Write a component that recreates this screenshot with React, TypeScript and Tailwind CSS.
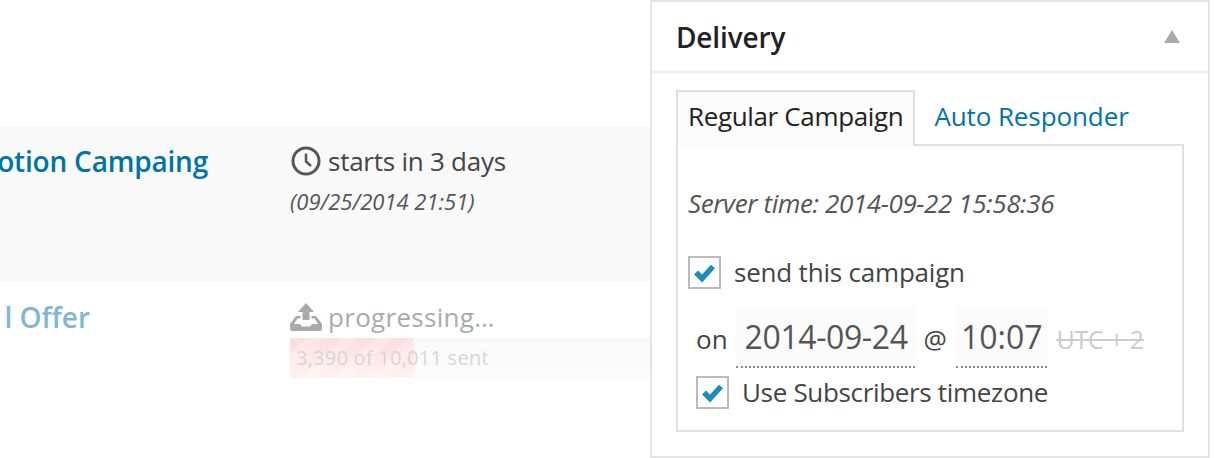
import React from "react";

function Check() {
  return (
    <span className="flex h-[33px] w-[33px] shrink-0 items-center justify-center border-2 border-[#bbbbbb] bg-white">
      <svg viewBox="0 0 29 29" className="h-[29px] w-[29px]">
        <path d="M6 14.5 L12 20.5 L23 8.5" fill="none" stroke="#1e8cbe" strokeWidth="5.5" />
      </svg>
    </span>
  );
}

function ClockIcon() {
  return (
    <svg viewBox="0 0 30 30" className="h-[30px] w-[30px] shrink-0" fill="none" stroke="#555555">
      <circle cx="15" cy="15" r="13" strokeWidth="3" />
      <path d="M15 7.5 V15.5 L20 20" strokeWidth="2.5" />
    </svg>
  );
}

function UploadIcon() {
  return (
    <svg viewBox="0 0 32 28" className="h-[28px] w-[32px] shrink-0" fill="#aaaaaa">
      <path d="M16 0 L24 9 H19.5 V17 H12.5 V9 H8 Z" />
      <path d="M6 13 H10.5 V15.5 H7.5 L4 21 H10 L12 23.5 H20 L22 21 H28 L24.5 15.5 H21.5 V13 H26 L32 21 V26 Q32 28 30 28 H2 Q0 28 0 26 V21 Z" />
    </svg>
  );
}

function App() {
  return (
    <div className="flex h-[458px] w-[1232px] overflow-hidden bg-white font-['Open_Sans',sans-serif] text-[#444444]">
      <div className="w-[650px] shrink-0 pt-[126px]">
        <div className="flex h-[156px] bg-[#f9f9f9] pt-[17px]">
          <div className="flex w-[208px] shrink-0 justify-end whitespace-nowrap text-[28px] font-semibold leading-[36px] tracking-[-0.2px] text-[#0074a2]">
            <span>otion Campaing</span>
          </div>
          <div className="ml-[83px]">
            <div className="flex h-[36px] items-center gap-[7px] text-[26px] tracking-[-0.25px]">
              <ClockIcon />
              <span>starts in 3 days</span>
            </div>
            <div className="-ml-[1px] mt-[8px] text-[22px] italic leading-[28px] text-[#555555]">(09/25/2014 21:51)</div>
          </div>
        </div>
        <div className="flex pt-[17px]">
          <div className="flex w-[90px] shrink-0 justify-end whitespace-nowrap text-[28px] font-semibold leading-[36px] text-[#7fb9d0]">
            <span>l Offer</span>
          </div>
          <div className="ml-[200px] flex-1">
            <div className="flex h-[36px] items-center gap-[6px] text-[26px] tracking-[0.3px] text-[#aaaaaa]">
              <UploadIcon />
              <span>progressing…</span>
            </div>
            <div className="relative mt-[3px] h-[40px] bg-[linear-gradient(to_bottom,#f9f9f9,#fcfcfc)]">
              <div className="absolute inset-y-0 left-0 w-[124px] bg-[repeating-linear-gradient(135deg,transparent_0,transparent_12px,rgba(255,255,255,0.25)_12px,rgba(255,255,255,0.25)_24px),linear-gradient(to_bottom,#ffdcdc,#fff2f2)]" />
              <div className="absolute left-[6px] top-0 text-[20px] leading-[40px] tracking-[0.25px] text-[#d6d6d6]">3,390 of 10,011 sent</div>
            </div>
          </div>
        </div>
      </div>
      <div className="flex h-[458px] w-[560px] shrink-0 flex-col border-2 border-[#e5e5e5] bg-white">
        <div className="flex h-[71px] shrink-0 items-center justify-between border-b-2 border-[#eeeeee] pl-[24px] pr-[28px]">
          <span className="text-[28px] font-semibold tracking-[-0.15px] text-[#222222]">Delivery</span>
          <span className="h-0 w-0 border-x-[8px] border-b-[13px] border-x-transparent border-b-[#aaaaaa]" />
        </div>
        <div className="px-[24px] pt-[17px]">
          <div className="-mb-[2px] flex items-end">
            <div className="relative z-10 border-2 border-b-0 border-[#dfdfdf] bg-[#fcfcfc] pb-[12px] pl-[10px] pr-[10px] pt-[6px] text-[26px] leading-[36px] tracking-[-0.35px] text-[#222222]">
              Regular Campaign
            </div>
            <div className="pb-[12px] pl-[19px] text-[26px] leading-[36px] tracking-[-0.1px] text-[#0074a2]">Auto Responder</div>
          </div>
          <div className="h-[288px] border-2 border-[#dfdfdf] px-[10px] pt-[40px]">
            <div className="text-[26px] italic leading-[34px] tracking-[-0.4px] text-[#555555]">Server time: 2014-09-22 15:58:36</div>
            <div className="mt-[35px] flex items-center gap-[13px]">
              <Check />
              <span className="text-[26px] leading-[34px] tracking-[-0.2px]">send this campaign</span>
            </div>
            <div className="mt-[19px] flex items-baseline pl-[8px]">
              <span className="text-[26px]">on</span>
              <span className="ml-[8px] border-b-2 border-dotted border-[#888888] bg-[#fbfbfb] pl-[9px] pr-[7px] text-[32px] leading-[58px] tracking-[-0.4px] text-[#555555]">2014-09-24</span>
              <span className="mx-[9px] text-[26px]">@</span>
              <span className="border-b-2 border-dotted border-[#888888] bg-[#fbfbfb] px-[5px] text-[32px] leading-[58px] text-[#555555]">10:07</span>
              <span className="ml-[9px] text-[25px] tracking-[-0.3px] text-[#cccccc] line-through">UTC + 2</span>
            </div>
            <div className="mt-[7px] flex items-center gap-[13px] pl-[8px]">
              <Check />
              <span className="text-[26px] leading-[34px] tracking-[-0.33px]">Use Subscribers timezone</span>
            </div>
          </div>
        </div>
      </div>
    </div>
  );
}

export default App;
